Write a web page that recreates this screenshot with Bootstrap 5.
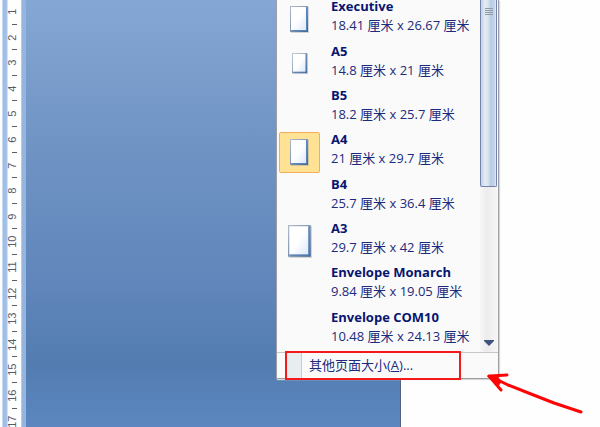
<!DOCTYPE html>
<html lang="zh-CN">
<head>
<meta charset="utf-8">
<meta name="viewport" content="width=device-width, initial-scale=1">
<title>页面大小</title>
<link href="https://cdn.jsdelivr.net/npm/bootstrap@5.3.0/dist/css/bootstrap.min.css" rel="stylesheet">
<style>
  body { font-family: "Open Sans", "Noto Sans CJK SC", sans-serif; font-size: 13px; color: #1b2a7c; background: #fefefe; }
  .ruler { flex: 0 0 26px; padding-left: 3px; background: linear-gradient(90deg, #fdfdfd 2px, #c5daf3 2px, #c5daf3 3px, #9dbbe3 3px, #a6c3e9 7px, #fff 8px, #fff 21px, #b4cdee 21px, #b4cdee 22px, #95b5de 22px); }
  .ruler-scale { height: 435px; width: 19px; margin-top: 5px; }
  .ruler-scale > span { flex: 1 1 0; min-height: 0; }
  .num { display: flex; align-items: center; justify-content: center; writing-mode: vertical-rl; transform: rotate(180deg); font: 11px/13px "Liberation Sans", sans-serif; color: #585b68; }
  .tick::before { content: ""; width: 5px; height: 1px; background: #5b5f6c; margin-left: 3px; }
  .desk { flex: 0 0 375px; background: linear-gradient(#85a7d5, #7094c4 33%, #5f85ba 68%, #537db1 85%, #5b86bf); border-right: 1px solid #53617a; }
  .size-menu { left: 250px; top: 0; width: 223px; background: #fafafa; border: 1px solid #9b9da2; border-top: 0; box-shadow: 1px 1px 1px #d8d8d8; }
  .sizes { height: 355px; margin-top: -3px; }
  .size-item { flex: 1 1 0; min-height: 0; padding: 0 0 0 2px; border: 0; background: none; color: inherit; text-align: left; }
  .thumb { width: 41px; height: 41px; margin-right: 11px; border: 1px solid transparent; border-radius: 2px; }
  .active-size .thumb { background: #ffe294; border-color: #f5ad5b; }
  .size-text { padding-bottom: 6px; }
  .size-name { line-height: 18px; font-weight: 700; color: #071570; }
  .size-dim { line-height: 20px; }
  .scroll-track { width: 17px; margin-right: 1px; background: linear-gradient(90deg, #f7f7f7, #ececec 40%, #f5f5f5); }
  .scroll-thumb { height: 187px; border: solid #7183ad; border-width: 0 1px 1px; border-radius: 0 0 2px 2px; background: linear-gradient(90deg, #c9d5e8 1px, #e4ebf3 4px, #d9e3ee 7px, #b9cbe1 10px, #c5d8ed 14px, #edf3fb 15px); }
  .menu-foot { border-top: 1px solid #c6c8cb; height: 26px; }
  .more { margin: -2px 0 0 8px; width: 176px; height: 29px; padding: 0; color: inherit; background: transparent; border: 2px solid #f6191c; }
  .more-gutter { width: 15px; background: #e8eeef; border-right: 1px solid #c6cccf; margin-right: 7px; }
  .pointer { left: 486px; top: 372px; }
</style>
</head>
<body class="vh-100 overflow-hidden position-relative">
<main class="d-flex vh-100 overflow-hidden">
  <div class="ruler overflow-hidden">
    <div class="ruler-scale d-flex flex-column align-items-center">
      <span class="num">1</span><span class="tick d-flex align-items-center"></span>
      <span class="num">2</span><span class="tick d-flex align-items-center"></span>
      <span class="num">3</span><span class="tick d-flex align-items-center"></span>
      <span class="num">4</span><span class="tick d-flex align-items-center"></span>
      <span class="num">5</span><span class="tick d-flex align-items-center"></span>
      <span class="num">6</span><span class="tick d-flex align-items-center"></span>
      <span class="num">7</span><span class="tick d-flex align-items-center"></span>
      <span class="num">8</span><span class="tick d-flex align-items-center"></span>
      <span class="num">9</span><span class="tick d-flex align-items-center"></span>
      <span class="num">10</span><span class="tick d-flex align-items-center"></span>
      <span class="num">11</span><span class="tick d-flex align-items-center"></span>
      <span class="num">12</span><span class="tick d-flex align-items-center"></span>
      <span class="num">13</span><span class="tick d-flex align-items-center"></span>
      <span class="num">14</span><span class="tick d-flex align-items-center"></span>
      <span class="num">15</span><span class="tick d-flex align-items-center"></span>
      <span class="num">16</span><span class="tick d-flex align-items-center"></span>
      <span class="num">17</span><span class="tick d-flex align-items-center"></span>
    </div>
  </div>
  <div class="desk position-relative">
    <div class="size-menu position-absolute">
      <div class="d-flex">
        <div class="sizes d-flex flex-column flex-fill">
          <button type="button" class="size-item d-flex align-items-center">
            <span class="thumb d-flex align-items-center justify-content-center"><svg width="19" height="27"><use href="#sheet"/></svg></span>
            <span class="size-text"><span class="size-name d-block">Executive</span><span class="size-dim d-block">18.41 厘米 x 26.67 厘米</span></span>
          </button>
          <button type="button" class="size-item d-flex align-items-center">
            <span class="thumb d-flex align-items-center justify-content-center"><svg width="16" height="21"><use href="#sheet"/></svg></span>
            <span class="size-text"><span class="size-name d-block">A5</span><span class="size-dim d-block">14.8 厘米 x 21 厘米</span></span>
          </button>
          <button type="button" class="size-item d-flex align-items-center">
            <span class="thumb"></span>
            <span class="size-text"><span class="size-name d-block">B5</span><span class="size-dim d-block">18.2 厘米 x 25.7 厘米</span></span>
          </button>
          <button type="button" class="size-item active-size d-flex align-items-center">
            <span class="thumb d-flex align-items-center justify-content-center"><svg width="19" height="27"><use href="#sheet"/></svg></span>
            <span class="size-text"><span class="size-name d-block">A4</span><span class="size-dim d-block">21 厘米 x 29.7 厘米</span></span>
          </button>
          <button type="button" class="size-item d-flex align-items-center">
            <span class="thumb"></span>
            <span class="size-text"><span class="size-name d-block">B4</span><span class="size-dim d-block">25.7 厘米 x 36.4 厘米</span></span>
          </button>
          <button type="button" class="size-item d-flex align-items-center">
            <span class="thumb d-flex align-items-center justify-content-center"><svg width="24" height="33"><use href="#sheet"/></svg></span>
            <span class="size-text"><span class="size-name d-block">A3</span><span class="size-dim d-block">29.7 厘米 x 42 厘米</span></span>
          </button>
          <button type="button" class="size-item d-flex align-items-center">
            <span class="thumb"></span>
            <span class="size-text"><span class="size-name d-block">Envelope Monarch</span><span class="size-dim d-block">9.84 厘米 x 19.05 厘米</span></span>
          </button>
          <button type="button" class="size-item d-flex align-items-center">
            <span class="thumb"></span>
            <span class="size-text"><span class="size-name d-block">Envelope COM10</span><span class="size-dim d-block">10.48 厘米 x 24.13 厘米</span></span>
          </button>
        </div>
        <div class="scroll-track d-flex flex-column justify-content-between">
          <div class="scroll-thumb text-center">
            <svg class="d-block mx-auto mt-2" width="8" height="8"><path d="M0 .5h8M0 2.5h8M0 4.5h8M0 6.5h8" stroke="#8f98a5"/></svg>
          </div>
          <svg class="d-block mx-auto mb-1" width="10" height="8"><path d="M0 0h10v1L5 6 0 1z" fill="#3f5380"/></svg>
        </div>
      </div>
      <div class="menu-foot">
        <button type="button" class="more d-flex align-items-stretch">
          <span class="more-gutter"></span>
          <span class="align-self-center">其他页面大小(<u>A</u>)...</span>
        </button>
      </div>
    </div>
  </div>
  <div class="flex-fill"></div>
</main>
<svg class="pointer position-absolute" width="100" height="44" fill="none" stroke="#fe0505" stroke-width="3" stroke-linecap="round" stroke-linejoin="round"><path d="M95 40L68 31 45 22 22 13 4 4M21 3L4 4M3 4L15 18"/><path d="M2 4l9 0 4 6-3 4z" fill="#fe0505" stroke-width="1"/></svg>
<svg width="0" height="0" class="position-absolute">
  <defs>
    <linearGradient id="paper" x1="0" y1="0" x2="1" y2="1"><stop offset=".5" stop-color="#fff"/><stop offset="1" stop-color="#dce8fb"/></linearGradient>
    <linearGradient id="rim" x1="0" y1="0" x2="1" y2="1"><stop offset="0" stop-color="#b3bdca"/><stop offset=".5" stop-color="#7f95b3"/><stop offset="1" stop-color="#3c6291"/></linearGradient>
    <symbol id="sheet" viewBox="0 0 19 27" preserveAspectRatio="none">
      <path d="M1 1h18v26H1z" fill="#8a9099" opacity=".35"/>
      <path d="M0 0h18v26H0z" fill="url(#rim)"/>
      <path d="M16 2l1-1v24H2l1-1h13z" fill="#5883bb"/>
      <path d="M1 1h15v23H1z" fill="url(#paper)"/>
    </symbol>
  </defs>
</svg>
<script src="https://cdn.jsdelivr.net/npm/bootstrap@5.3.0/dist/js/bootstrap.bundle.min.js"></script>
</body>
</html>
